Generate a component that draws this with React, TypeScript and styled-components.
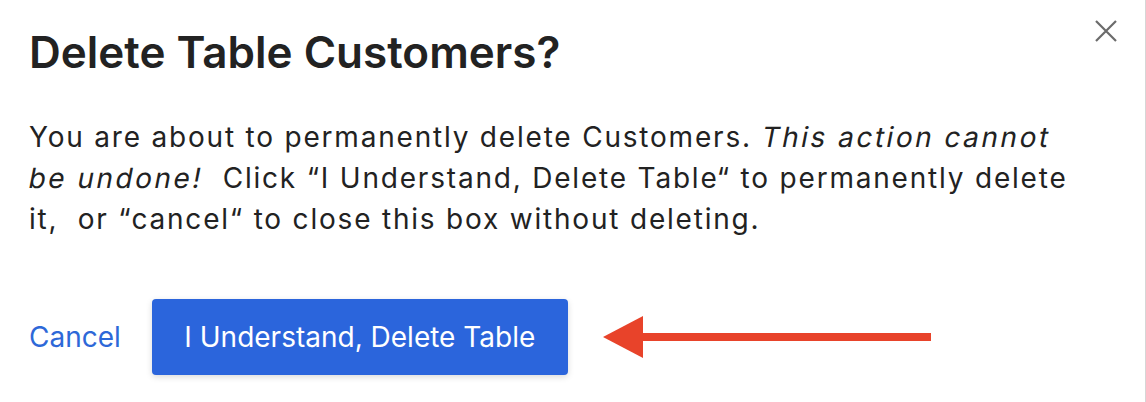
import styled, { createGlobalStyle } from "styled-components";

const GlobalStyle = createGlobalStyle`
  html, body {
    margin: 0;
    padding: 0;
    background: #ffffff;
  }
  body {
    font-family: Inter, "Noto Sans", sans-serif;
    color: #222222;
  }
`;

const App = () => {
  return (
    <>
      <GlobalStyle />
      <DialogStyled>
        <HeaderStyled>
          <TitleStyled>Delete Table Customers?</TitleStyled>
          <CloseButtonStyled aria-label="Close">
            <svg width="22" height="22" viewBox="0 0 22 22">
              <path d="M1 1 L21 21 M21 1 L1 21" stroke="#6b6b6b" strokeWidth="2.2" />
            </svg>
          </CloseButtonStyled>
        </HeaderStyled>
        <BodyTextStyled>
          You are about to permanently delete Customers.{" "}
          <ObliqueStyled>This action cannot</ObliqueStyled>{" "}
          <ObliqueStyled>be undone!</ObliqueStyled>&nbsp; Click “I Understand,
          Delete Table“ to permanently delete it,&nbsp; or “cancel“ to close
          this box without deleting.
        </BodyTextStyled>
        <FooterStyled>
          <CancelLinkStyled href="#">Cancel</CancelLinkStyled>
          <DeleteButtonStyled>I Understand, Delete Table</DeleteButtonStyled>
          <ArrowStyled width="330" height="42" viewBox="0 0 330 42">
            <polygon points="0,21 40,0 40,42" fill="#e8432a" />
            <rect x="38" y="17" width="290" height="8" fill="#e8432a" />
          </ArrowStyled>
        </FooterStyled>
      </DialogStyled>
    </>
  );
};

const DialogStyled = styled.div`
  box-sizing: border-box;
  width: 1146px;
  height: 402px;
  padding: 0 33px 0 29px;
  border-right: 1px solid #d6d6d6;
  background: #ffffff;
`;

const HeaderStyled = styled.div`
  display: flex;
  align-items: flex-start;
  justify-content: space-between;
  padding-top: 27px;
`;

const TitleStyled = styled.h1`
  margin: 0;
  font-size: 44px;
  line-height: 50px;
  font-weight: 600;
  color: #222222;
`;

const CloseButtonStyled = styled.button`
  margin: -7px -5px 0 0;
  padding: 0;
  border: none;
  background: none;
  cursor: pointer;
  line-height: 0;
`;

const BodyTextStyled = styled.p`
  max-width: 1072px;
  margin: 40px 0 0;
  font-size: 28px;
  line-height: 41px;
  letter-spacing: 1.8px;
  color: #222222;
`;

const ObliqueStyled = styled.span`
  display: inline-block;
  letter-spacing: 2.5px;
  transform: skewX(-11deg);
`;

const FooterStyled = styled.div`
  display: flex;
  align-items: center;
  margin-top: 59px;
`;

const CancelLinkStyled = styled.a`
  font-size: 28px;
  color: #2d68d8;
  text-decoration: none;
  margin-right: 31px;
`;

const DeleteButtonStyled = styled.button`
  width: 416px;
  height: 76px;
  border: none;
  border-radius: 4px;
  background: #2b65dc;
  color: #ffffff;
  font-family: Inter, "Noto Sans", sans-serif;
  font-size: 28px;
  box-shadow: 0 2px 6px rgba(0, 0, 0, 0.15);
  cursor: pointer;
`;

const ArrowStyled = styled.svg`
  margin-left: 35px;
`;

export default App;
